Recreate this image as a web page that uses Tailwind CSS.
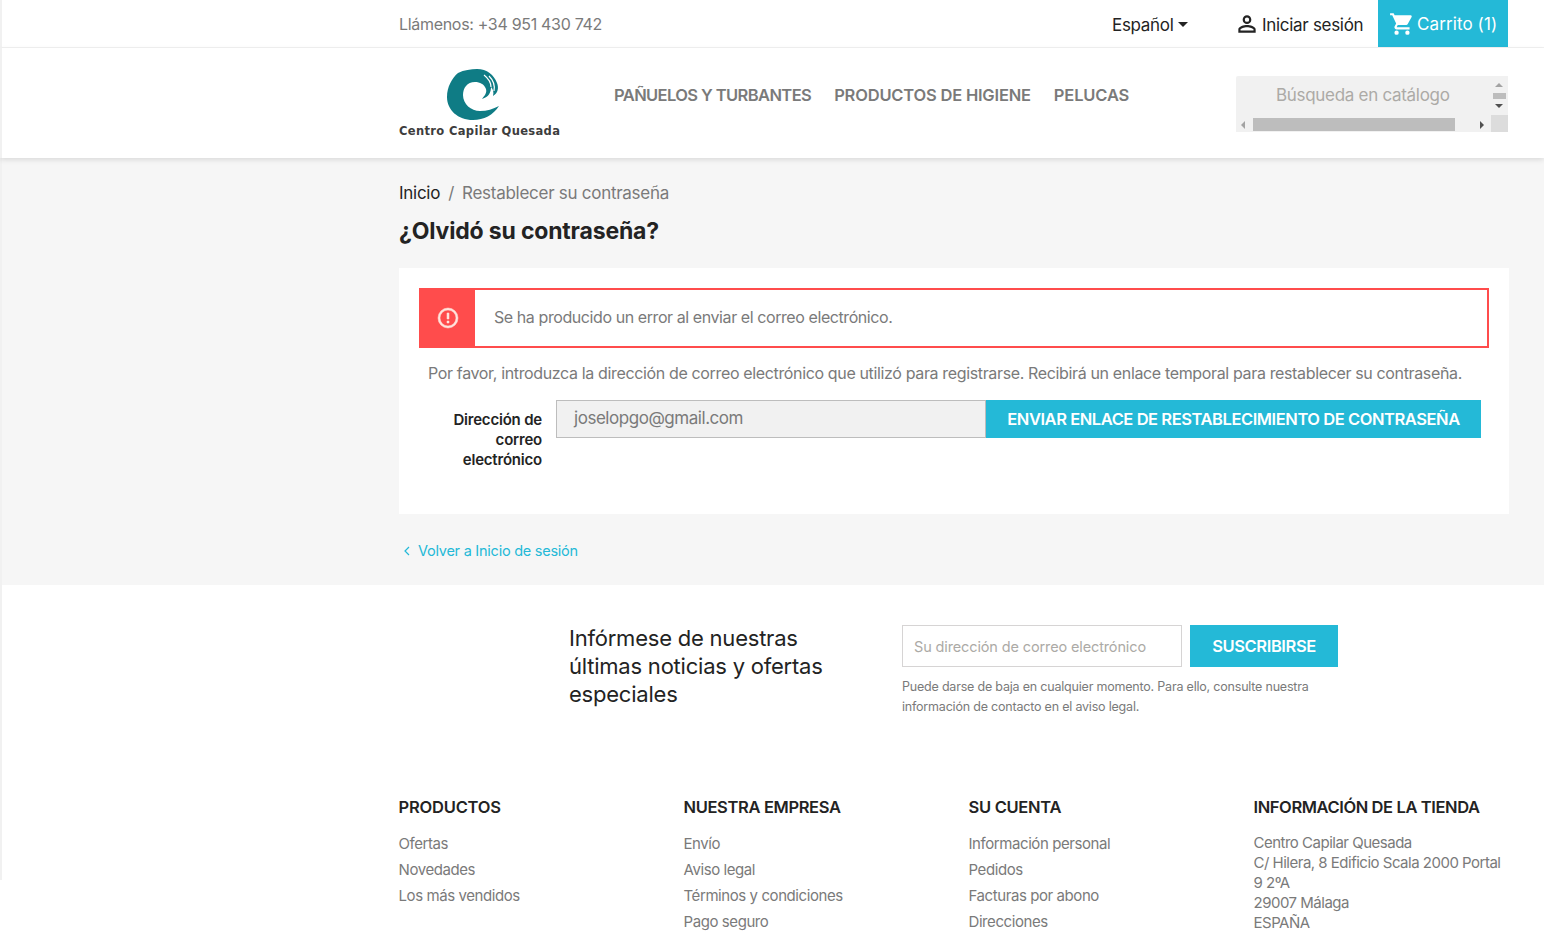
<!DOCTYPE html>
<html lang="es">
<head>
    <meta charset="UTF-8">
    <title>¿Olvidó su contraseña?</title>
    <script src="https://cdn.jsdelivr.net/npm/@tailwindcss/browser@4"></script>
</head>
<body class="bg-white h-[935px] overflow-hidden font-['Inter',sans-serif] text-[#7a7a7a]">
    <div class="relative">
        <!-- shadow strip on the left edge -->
        <div class="absolute left-0 top-0 w-[2px] h-[880px] bg-[#f1f1f1]"></div>

        <!-- top bar -->
        <div class="h-[48px] border-b border-[#f1f1f1] pl-[399px] flex items-center">
            <span class="w-[203px] text-[16px] tracking-[-0.31px] text-[#7a7a7a] whitespace-nowrap">Llámenos: +34 951 430 742</span>
            <div class="ml-[510px] w-[77px] flex items-center text-[#232323] text-[17px] tracking-[-0.3px] pt-[4px]">
                <span>Español</span>
                <span class="ml-[4px] -mt-[2px] w-0 h-0 border-x-[5px] border-x-transparent border-t-[5px] border-t-[#232323]"></span>
            </div>
            <svg class="ml-[45px] w-[26px] h-[26px] shrink-0" viewBox="0 0 24 24" fill="#232323"><path d="M12 6a2 2 0 1 1 0 4 2 2 0 0 1 0-4m0 9c2.7 0 5.8 1.3 6 2v1H6v-1c.2-.7 3.3-2 6-2M12 4a4 4 0 1 0 0 8 4 4 0 0 0 0-8zm0 9c-2.7 0-8 1.3-8 4v3h16v-3c0-2.7-5.3-4-8-4z"/></svg>
            <span class="ml-[2px] w-[116px] text-[17px] tracking-[-0.3px] text-[#232323] pt-[4px] whitespace-nowrap">Iniciar sesión</span>
            <div class="h-[47px] w-[130px] bg-[#24b9d7] flex items-center pl-[11px] text-white text-[17px] tracking-[0.1px] self-start shrink-0">
                <svg class="w-[26px] h-[26px] shrink-0" viewBox="0 0 24 24" fill="white"><path d="M7 18a2 2 0 1 0 0 4 2 2 0 0 0 0-4zM1 2v2h2l3.6 7.6-1.35 2.45C5.09 14.32 5 14.65 5 15c0 1.1.9 2 2 2h12v-2H7.42a.25.25 0 0 1-.25-.25l.03-.12L8.1 13h7.45c.75 0 1.41-.41 1.75-1.03l3.58-6.49A1 1 0 0 0 20 4H5.21l-.94-2H1zm16 16a2 2 0 1 0 0 4 2 2 0 0 0 0-4z"/></svg>
                <span class="ml-[2px] pt-[2px] whitespace-nowrap">Carrito (1)</span>
            </div>
        </div>

        <!-- main header -->
        <div class="relative h-[110px] pl-[399px] flex shadow-[0_2px_5px_rgba(0,0,0,0.11)]">
            <div class="w-[215px] pt-[20px] flex flex-col items-start">
                <svg class="ml-[48px] w-[56px] h-[54px]" viewBox="0 0 56 54">
                    <path fill="#0f7c85" d="M11 5C17 2 24 1 30 1C40 1 47 7 50 15C52 20 51 25 46 28C47 24 46 21 44 19C44 24 42 29 35 31C38 27 40 25 39 21C37 16 33 14 28 14C20 14 16 20 16 27C16 36 24 43 33 43C40 43 46 41 52 38C46 47 37 52 26 52C11 52 0 42 0 29C0 19 5 10 11 5Z"/>
                    <path fill="none" stroke="#fff" stroke-width="1.2" d="M42 8C47 13 48 18 47 23M37 7C42 11 44 15 44 19"/>
                </svg>
                <span class="mt-[2px] font-['DejaVu_Sans',sans-serif] font-bold text-[11.5px] tracking-[0.35px] text-[#3d3d3d] leading-[14px] whitespace-nowrap">Centro Capilar Quesada</span>
            </div>
            <nav class="pt-[36px] flex gap-[23px] text-[#7a7a7a] text-[16.5px] leading-[22px] font-semibold">
                <span class="tracking-[-0.6px]">PAÑUELOS Y TURBANTES</span>
                <span class="tracking-[-0.2px]">PRODUCTOS DE HIGIENE</span>
                <span class="tracking-[-0.15px]">PELUCAS</span>
            </nav>
            <div class="absolute left-[1236px] top-[28px] w-[272px] h-[56px] bg-[#f1f1f1] rounded-tl-[2px]">
                <div class="pt-[7px] pl-[40px] text-[17px] leading-[25px] tracking-[-0.3px] text-[#acaaa6]">Búsqueda en catálogo</div>
                <!-- textarea scrollbars -->
                <div class="absolute left-[5px] bottom-[3px] w-0 h-0 border-y-[4px] border-y-transparent border-r-[4px] border-r-[#a3a3a3]"></div>
                <div class="absolute left-[17px] bottom-[1px] w-[202px] h-[13px] bg-[#bdbdbd]"></div>
                <div class="absolute right-[24px] bottom-[3px] w-0 h-0 border-y-[4px] border-y-transparent border-l-[4px] border-l-[#505050]"></div>
                <div class="absolute right-0 bottom-0 w-[17px] h-[17px] bg-[#dcdcdc]"></div>
                <div class="absolute right-[5px] top-[7px] w-0 h-0 border-x-[4px] border-x-transparent border-b-[4px] border-b-[#a3a3a3]"></div>
                <div class="absolute right-[2px] top-[17px] w-[13px] h-[6px] bg-[#bdbdbd]"></div>
                <div class="absolute right-[5px] top-[28px] w-0 h-0 border-x-[4px] border-x-transparent border-t-[4px] border-t-[#505050]"></div>
            </div>
        </div>

        <!-- content -->
        <div class="bg-[#f6f6f6] h-[427px] pl-[397px] pr-[35px] ml-[2px]">
            <div class="pt-[24px] text-[17px] leading-[22px] tracking-[-0.27px]">
                <span class="text-[#232323]">Inicio</span><span class="mx-[8px]">/</span><span>Restablecer su contraseña</span>
            </div>
            <h1 class="mt-[12px] text-[23px] leading-[30px] font-bold tracking-[-0.17px] text-[#232323]">¿Olvidó su contraseña?</h1>
            <div class="mt-[22px] h-[246px] bg-white px-[20px] pt-[20px]">
                <div class="flex h-[60px] border-2 border-[#ff4c4c]">
                    <div class="w-[56px] -ml-[2px] -my-[2px] bg-[#ff4c4c] flex items-center justify-center shrink-0">
                        <svg class="ml-[2px] w-[24px] h-[24px]" viewBox="0 0 24 24" fill="#ffe4dc" stroke="#ffe4dc" stroke-width="0.5"><path d="M11 15h2v2h-2zm0-8h2v6h-2zm1-5a10 10 0 1 0 0 20 10 10 0 0 0 0-20zm0 18a8 8 0 1 1 0-16 8 8 0 0 1 0 16z"/></svg>
                    </div>
                    <p class="pl-[19px] pb-[2px] flex items-center text-[16px] tracking-[-0.42px]">Se ha producido un error al enviar el correo electrónico.</p>
                </div>
                <p class="mt-[14px] pl-[9px] text-[16px] leading-[22px] tracking-[-0.355px] whitespace-nowrap">Por favor, introduzca la dirección de correo electrónico que utilizó para registrarse. Recibirá un enlace temporal para restablecer su contraseña.</p>
                <div class="mt-[16px] flex">
                    <label class="w-[123px] text-right text-[15px] leading-[20px] font-semibold tracking-[-0.2px] text-[#232323] pt-[10px]">Dirección de correo electrónico</label>
                    <div class="ml-[14px] w-[430px] h-[38px] bg-[#f1f1f1] border border-[#bdbdbd] pl-[17px] flex items-center text-[17px] tracking-[-0.46px]">joselopgo@gmail.com</div>
                    <div class="w-[495px] h-[38px] bg-[#24b9d7] text-white flex items-center justify-center text-[16.5px] font-semibold tracking-[-0.44px]">ENVIAR ENLACE DE RESTABLECIMIENTO DE CONTRASEÑA</div>
                </div>
            </div>
            <div class="mt-[26px] flex items-center text-[#24b9d7] text-[14.5px] tracking-[-0.25px]">
                <svg class="w-[8px] h-[10px] ml-[4px]" viewBox="0 0 8 10" fill="none" stroke="#24b9d7" stroke-width="1.2"><path d="M6 1 2 5l4 4"/></svg>
                <span class="ml-[7px]">Volver a Inicio de sesión</span>
            </div>
        </div>

        <!-- newsletter -->
        <div class="pl-[569px] pt-[40px] flex h-[211px]">
            <p class="w-[333px] text-[22px] leading-[28px] tracking-[-0.22px] text-[#232323] -mt-[1px]">Infórmese de nuestras<br>últimas noticias y ofertas<br>especiales</p>
            <div class="w-[440px]">
                <div class="flex">
                    <div class="w-[280px] h-[42px] border border-[#d6d4d4] flex items-center pl-[11px] pt-[1px] text-[14.5px] tracking-[-0.13px] text-[#acaaa6]">Su dirección de correo electrónico</div>
                    <div class="ml-[8px] w-[148px] h-[42px] bg-[#24b9d7] text-white flex items-center justify-center text-[16.5px] font-semibold tracking-[-0.4px]">SUSCRIBIRSE</div>
                </div>
                <p class="mt-[10px] text-[12.5px] leading-[20px] tracking-[-0.2px]">Puede darse de baja en cualquier momento. Para ello, consulte nuestra<br>información de contacto en el aviso legal.</p>
            </div>
        </div>

        <!-- footer -->
        <div class="pl-[398.5px] grid grid-cols-[285px_285px_285px_260px] text-[15px] tracking-[-0.42px]">
            <div>
                <h3 class="text-[16.5px] leading-[22px] font-semibold tracking-[-0.2px] text-[#232323] mb-[13px]">PRODUCTOS</h3>
                <ul class="leading-[26px]"><li>Ofertas</li><li>Novedades</li><li>Los más vendidos</li></ul>
            </div>
            <div>
                <h3 class="text-[16.5px] leading-[22px] font-semibold tracking-[-0.35px] text-[#232323] mb-[13px]">NUESTRA EMPRESA</h3>
                <ul class="leading-[26px]"><li>Envío</li><li>Aviso legal</li><li>Términos y condiciones</li><li>Pago seguro</li></ul>
            </div>
            <div>
                <h3 class="text-[16.5px] leading-[22px] font-semibold tracking-[-0.3px] text-[#232323] mb-[13px]">SU CUENTA</h3>
                <ul class="leading-[26px]"><li>Información personal</li><li>Pedidos</li><li>Facturas por abono</li><li>Direcciones</li></ul>
            </div>
            <div class="w-[260px]">
                <h3 class="text-[16.5px] leading-[22px] font-semibold tracking-[-0.4px] text-[#232323] mb-[15px] whitespace-nowrap">INFORMACIÓN DE LA TIENDA</h3>
                <p class="leading-[20px] tracking-[-0.5px]">Centro Capilar Quesada<br>C/ Hilera, 8 Edificio Scala 2000 Portal<br>9 2ºA<br>29007 Málaga<br>ESPAÑA</p>
            </div>
        </div>
    </div>
</body>
</html>
